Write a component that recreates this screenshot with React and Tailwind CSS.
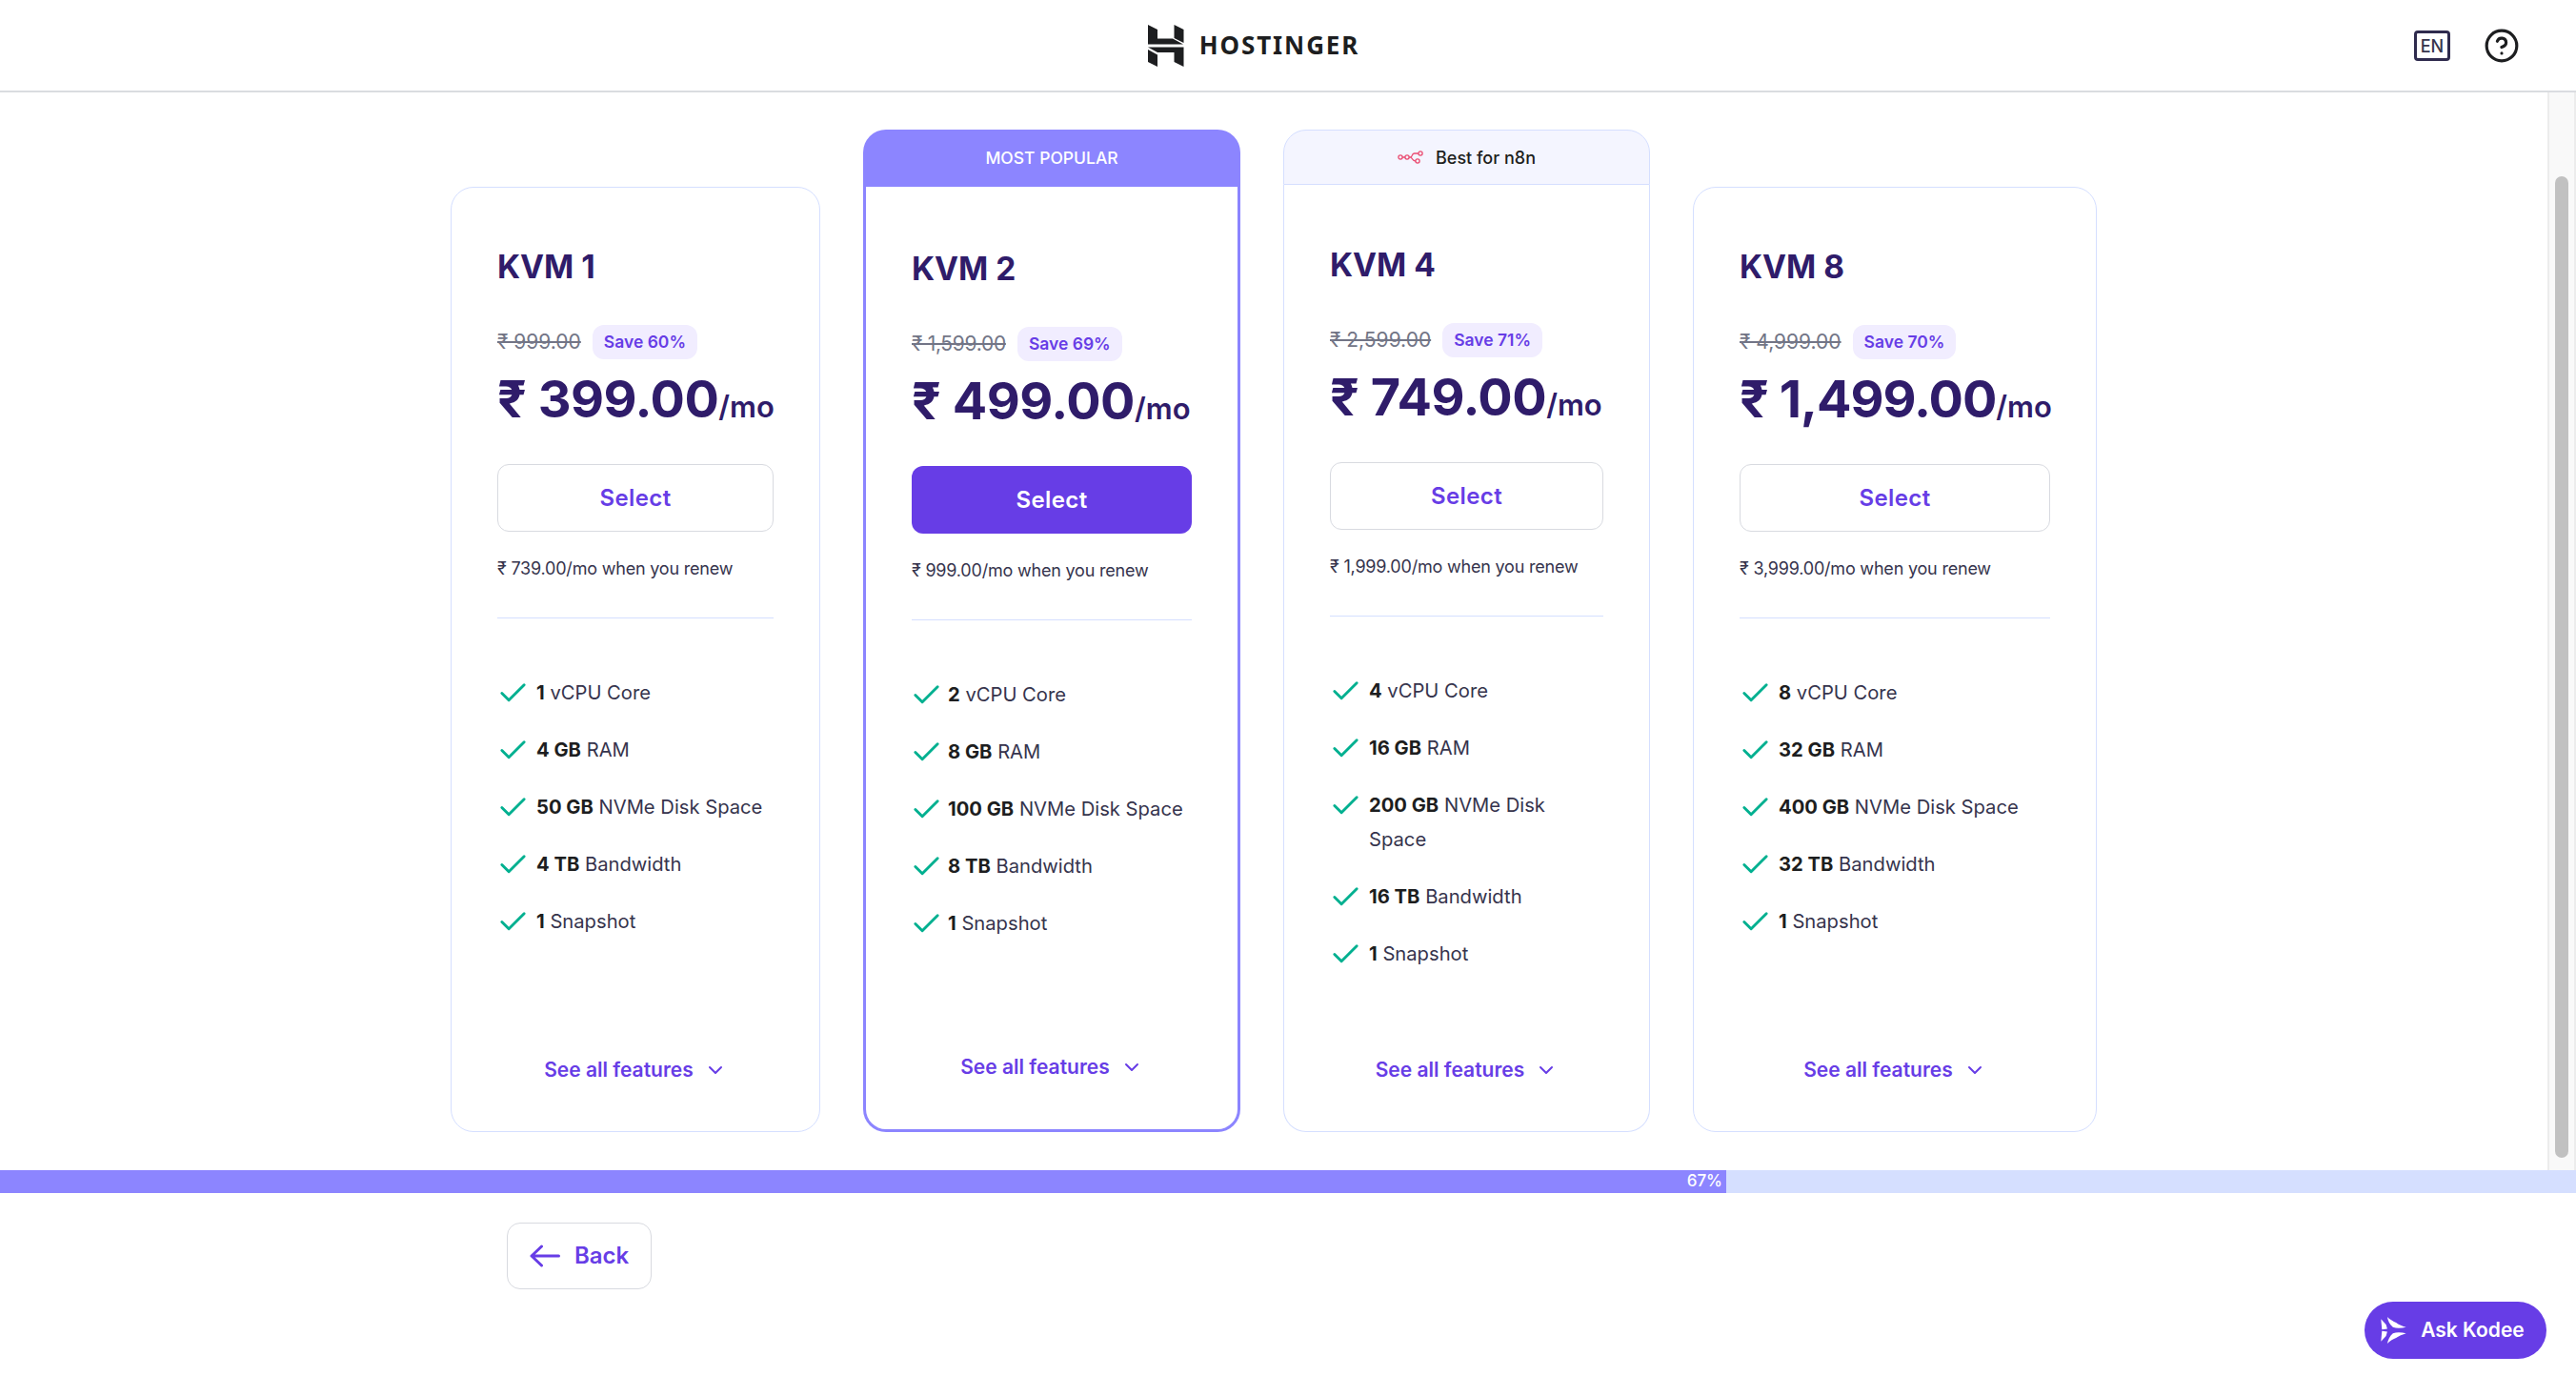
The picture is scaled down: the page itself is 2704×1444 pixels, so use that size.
import { Check, ChevronDown, CircleHelp } from "lucide-react";

const FONT = "font-['Inter','Liberation_Sans',sans-serif]";

const plans = [
  {
    name: "KVM 1",
    oldPrice: "₹ 999.00",
    save: "Save 60%",
    price: "₹ 399.00",
    renew: "₹ 739.00/mo when you renew",
    width: "w-[388px]",
    bodyTop: "pt-[61px]",
    footer: "pb-[50px]",
    features: [
      ["1", "vCPU Core"],
      ["4 GB", "RAM"],
      ["50 GB", "NVMe Disk Space"],
      ["4 TB", "Bandwidth"],
      ["1", "Snapshot"],
    ],
  },
  {
    name: "KVM 2",
    oldPrice: "₹ 1,599.00",
    save: "Save 69%",
    price: "₹ 499.00",
    renew: "₹ 999.00/mo when you renew",
    width: "w-[396px]",
    bodyTop: "pt-[64px]",
    footer: "pb-[51px]",
    popular: true,
    features: [
      ["2", "vCPU Core"],
      ["8 GB", "RAM"],
      ["100 GB", "NVMe Disk Space"],
      ["8 TB", "Bandwidth"],
      ["1", "Snapshot"],
    ],
  },
  {
    name: "KVM 4",
    oldPrice: "₹ 2,599.00",
    save: "Save 71%",
    price: "₹ 749.00",
    renew: "₹ 1,999.00/mo when you renew",
    width: "w-[385px]",
    bodyTop: "pt-[62px]",
    footer: "pb-[50px]",
    n8n: true,
    features: [
      ["4", "vCPU Core"],
      ["16 GB", "RAM"],
      ["200 GB", "NVMe Disk Space"],
      ["16 TB", "Bandwidth"],
      ["1", "Snapshot"],
    ],
  },
  {
    name: "KVM 8",
    oldPrice: "₹ 4,999.00",
    save: "Save 70%",
    price: "₹ 1,499.00",
    renew: "₹ 3,999.00/mo when you renew",
    width: "w-[424px]",
    bodyTop: "pt-[61px]",
    footer: "pb-[50px]",
    tightPrice: true,
    features: [
      ["8", "vCPU Core"],
      ["32 GB", "RAM"],
      ["400 GB", "NVMe Disk Space"],
      ["32 TB", "Bandwidth"],
      ["1", "Snapshot"],
    ],
  },
];

const HostingerMark = () => (
  <svg viewBox="0 0 38 44" className="h-[44px] w-[38px]" fill="#1d1e20">
    <path d="M0 0l10 5v9.500h16l11 6h-37z" />
    <path d="M27.500 0l10 5v14l-10-5z" />
    <path d="M0 23.500h37.500v20.500l-10-5v-10h-17.500z" />
    <path d="M0 26l10 5.500v12.500l-10-5z" />
  </svg>
);

const N8nIcon = () => (
  <svg viewBox="0 0 27 14" className="h-[14px] w-[27px]" fill="none" stroke="#ea4b71" strokeWidth="1.300">
    <circle cx="3" cy="7" r="2.100" />
    <circle cx="10" cy="7" r="2.100" />
    <circle cx="24" cy="3" r="2.100" />
    <circle cx="21" cy="11" r="2.100" />
    <path d="M5.100 7h2.800M12.100 7h1.400c2.500 0 1-4 4-4h4.400M13.500 7c2 0 1.500 4 5.400 4" />
  </svg>
);

const KodeeIcon = () => (
  <svg viewBox="0 0 80 85" className="h-[28px] w-[27px]" fill="#fff">
    <path d="M20 0c8 8 20 15 28 18 7 6 22 12 32 15-15 3-30 4-42 0-10-8-16-21-18-33z" />
    <path d="M20 85c8-8 20-15 28-18 7-6 22-12 32-15-15-3-30-4-42 0-10 8-16 21-18 33z" />
    <path d="M0 7l16 17 4 14-17 2z" />
    <path d="M0 78l16-17 4-14-17-2z" />
  </svg>
);

const BackArrow = () => (
  <svg viewBox="0 0 32 24" className="h-[24px] w-[32px]" fill="none" stroke="currentColor" strokeWidth="3" strokeLinecap="round" strokeLinejoin="round">
    <path d="M30.500 12h-28.500M12.500 2l-10.500 10 10.500 10" />
  </svg>
);

const PlanCard = ({ plan }) => {
  const borderClass = plan.popular ? "border-[3px] border-[#8c85ff]" : "border border-[#d5dfff]";
  return (
    <div className={`${plan.width} flex h-full flex-col`}>
      {plan.popular && (
        <div className="flex h-[60px] items-center justify-center rounded-t-[24px] bg-[#8c85ff] text-[17.500px] font-medium text-white">
          MOST POPULAR
        </div>
      )}
      {plan.n8n && (
        <div className="flex h-[58px] items-center justify-center gap-[13px] rounded-t-[24px] border border-[#d5dfff] bg-[#f4f5ff] text-[18px] font-medium text-[#1d1e20]">
          <N8nIcon />
          Best for n8n
        </div>
      )}
      <div
        className={`flex flex-1 flex-col bg-white ${borderClass} ${plan.popular || plan.n8n ? "rounded-b-[24px] border-t-0" : "rounded-[24px]"}`}
      >
        <div className={`flex flex-1 flex-col px-[48px] ${plan.bodyTop} ${plan.footer}`}>
          <h2 className="text-[33.500px] leading-[44px] font-bold text-[#2f1c6a]">{plan.name}</h2>
          <div className="mt-[39px] flex h-[36px] items-center gap-[12px]">
            <span className={`text-[21px] text-[#727586] line-through ${plan.popular ? "tracking-[-0.3px]" : ""}`}>
              {plan.oldPrice}
            </span>
            <span className="flex h-[36px] items-center rounded-[12px] bg-[#f1edff] px-[12px] text-[17.500px] font-semibold text-[#673de6]">
              {plan.save}
            </span>
          </div>
          <div className="mt-[10px] flex items-baseline whitespace-nowrap text-[#2f1c6a]">
            <span className={`text-[54px] leading-[64px] font-bold ${plan.tightPrice ? "tracking-[-1px]" : "tracking-[-0.5px]"}`}>
              {plan.price}
            </span>
            <span className="text-[31px] font-semibold">/mo</span>
          </div>
          <button
            className={`mt-[36px] h-[71px] rounded-[12px] text-[24px] font-semibold tracking-[0.4px] ${
              plan.popular ? "bg-[#673de6] text-white" : "border border-[#d8dae0] bg-white text-[#673de6]"
            }`}
          >
            Select
          </button>
          <p className="mt-[26px] text-[18px] leading-[26px] tracking-[-0.2px] text-[#36344d]">{plan.renew}</p>
          <div className="mt-[38px] h-px bg-[#d5dfff]" />
          <ul className="mt-[60px] flex flex-col gap-[24px]">
            {plan.features.map(([strong, rest]) => (
              <li
                key={rest}
                className={`flex items-start text-[20.200px] leading-[36px] text-[#36344d] ${plan.popular ? "gap-[5px]" : "gap-[7px]"}`}
              >
                <Check className={`mt-px shrink-0 ${plan.popular ? "ml-[-2px]" : "ml-[-1px]"}`} size={35} strokeWidth={2} color="#00b090" />
                <span>
                  <b className="font-bold text-[#1d1e20]">{strong}</b> {rest}
                </span>
              </li>
            ))}
          </ul>
          <a className="mt-auto flex items-center justify-center gap-[11px] text-[21px] leading-[28px] font-semibold text-[#673de6]">
            See all features
            <ChevronDown size={24} strokeWidth={2} />
          </a>
        </div>
      </div>
    </div>
  );
};

export default function App() {
  return (
    <div className={`${FONT} flex h-screen flex-col overflow-hidden bg-white`}>
      <header className="relative flex h-[97px] shrink-0 items-center justify-center border-b-2 border-[#dadce0]">
        <div className="ml-[-72px] flex items-center gap-[16px]">
          <HostingerMark />
          <span className="font-['Noto_Sans',sans-serif] text-[26px] font-bold tracking-[1.900px] text-[#1d1e20]">
            HOSTINGER
          </span>
        </div>
        <div className="absolute top-[29px] right-[59px] flex items-center gap-[35px]">
          <span className="flex h-[32px] w-[38px] items-center justify-center rounded-[4px] border-[3px] border-[#2f2b4e] text-[18px] font-medium text-[#36344d]">
            EN
          </span>
          <CircleHelp size={38} strokeWidth={2} color="#1d1e20" />
        </div>
      </header>

      <div className="flex h-[1131px] shrink-0">
        <main className="flex flex-1 items-stretch justify-center gap-[45px] pt-[39px] pb-[40px]">
          {plans.map((plan) => (
            <div key={plan.name} className="flex flex-col justify-end">
              <div className={plan.popular || plan.n8n ? "h-[1052px]" : "h-[992px]"}>
                <PlanCard plan={plan} />
              </div>
            </div>
          ))}
        </main>
        <div className="w-[30px] shrink-0 border-x-2 border-[#ececec] bg-[#f9f9f9] px-[6px] pt-[88px]">
          <div className="h-[1030px] rounded-full bg-[#c1c1c1]" />
        </div>
      </div>

      <div className="h-[24px] shrink-0 bg-[#d5dfff]">
        <div className="flex h-full w-[1812px] items-center justify-end bg-[#8c85ff] pr-[4px] text-[17px] font-medium text-white">
          67%
        </div>
      </div>

      <div className="relative flex-1 pt-[31px] pl-[532px]">
        <button className="flex h-[70px] w-[152px] items-center justify-center gap-[15px] rounded-[14px] border border-[#d8dae0] bg-white text-[24px] font-semibold text-[#673de6]">
          <BackArrow />
          Back
        </button>
        <button className="absolute right-[31px] bottom-[18px] flex h-[60px] w-[191px] items-center justify-center gap-[15px] rounded-full bg-[#673de6] pr-[6px] text-[21px] font-semibold text-white">
          <KodeeIcon />
          Ask Kodee
        </button>
      </div>
    </div>
  );
}
